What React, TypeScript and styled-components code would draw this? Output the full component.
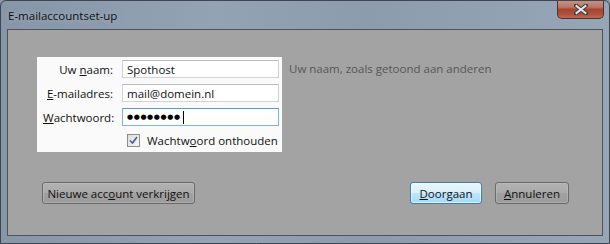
import React from "react";
import styled, { createGlobalStyle } from "styled-components";

const Global = createGlobalStyle`
  html, body { margin: 0; padding: 0; background: #8a99a8; }
  body { font-family: "Segoe UI", "Open Sans", "Noto Sans", sans-serif; }
`;

const Window = styled.div`
  box-sizing: border-box;
  width: 610px;
  height: 244px;
  border: 1px solid #3f4650;
  border-radius: 6px 6px 0 0;
  background: linear-gradient(90deg, #8797a8 0%, #93a3b3 35%, #8c9cad 60%, #96a6b6 100%);
  display: flex;
  flex-direction: column;
  padding: 0 6px 7px 6px;
  overflow: hidden;
`;

const TitleBar = styled.div`
  height: 28px;
  display: flex;
  align-items: flex-start;
  justify-content: space-between;
`;

const Title = styled.div`
  font-size: 11.5px;
  color: #101010;
  padding: 7px 0 0 1px;
  text-shadow: 0 0 6px rgba(200, 210, 220, 0.6);
`;

const CloseButton = styled.div`
  box-sizing: border-box;
  width: 47px;
  height: 19px;
  margin-top: -1px;
  margin-right: -1px;
  border: 1px solid #4a3433;
  border-top: none;
  border-radius: 0 0 5px 5px;
  background: linear-gradient(#c8968a 0%, #b87566 40%, #a5442f 52%, #b2513b 80%, #bd6a55 100%);
  display: flex;
  align-items: center;
  justify-content: center;
`;

const Content = styled.div`
  flex: 1;
  border: 1px solid #4f5358;
  background: #a3a3a3;
  display: flex;
  flex-direction: column;
  padding: 27px 0 31px 0;
`;

const FormRow = styled.div`
  display: flex;
  align-items: flex-start;
  gap: 7px;
  padding-left: 29px;
`;

const Panel = styled.div`
  box-sizing: border-box;
  width: 245px;
  background: #fafafa;
  padding: 3px 3px 4px 6px;
  display: grid;
  grid-template-columns: 70px 157px;
  column-gap: 9px;
  row-gap: 6px;
  align-items: center;
`;

const Label = styled.label`
  font-size: 11.5px;
  color: #111;
  text-align: right;
  white-space: nowrap;
`;

const Field = styled.div<{ $focused?: boolean }>`
  box-sizing: border-box;
  height: 18px;
  background: #fff;
  border: 1px solid ${(p) => (p.$focused ? "#7fb2e0" : "#d0d3d8")};
  border-top-color: ${(p) => (p.$focused ? "#5a9ad6" : "#b9bdc4")};
  font-size: 11.5px;
  color: #111;
  padding: 0 4px;
  display: flex;
  align-items: center;
  white-space: nowrap;
`;

const Dots = styled.span`
  font-family: "DejaVu Sans", sans-serif;
  font-size: 7px;
  letter-spacing: 0.6px;
  color: #000;
`;

const Caret = styled.span`
  display: inline-block;
  width: 1px;
  height: 13px;
  background: #000;
  margin-left: 2px;
`;

const CheckRow = styled.div`
  grid-column: 2;
  display: flex;
  align-items: center;
  gap: 7px;
  padding-left: 5px;
  height: 16px;
  font-size: 11.5px;
  color: #111;
  white-space: nowrap;
`;

const Box = styled.span`
  box-sizing: border-box;
  width: 13px;
  height: 13px;
  border: 1px solid #8e8f8f;
  background: linear-gradient(135deg, #dcdcdc, #f6f6f6);
  display: inline-flex;
  align-items: center;
  justify-content: center;
`;

const Help = styled.div`
  font-size: 11.5px;
  color: #575757;
  padding-top: 4px;
  white-space: nowrap;
`;

const ButtonRow = styled.div`
  margin-top: auto;
  display: flex;
  align-items: center;
  padding: 0 33px 0 34px;
  gap: 13px;
`;

const Spacer = styled.div`
  flex: 1;
`;

const Button = styled.div<{ $primary?: boolean; $w: number }>`
  box-sizing: border-box;
  height: 22px;
  width: ${(p) => p.$w}px;
  border: 1px solid ${(p) => (p.$primary ? "#3c7fb1" : "#6a6a6a")};
  border-radius: 3px;
  background: ${(p) =>
    p.$primary
      ? "linear-gradient(#eaf6fd 0%, #d9f0fc 48%, #bee6fd 52%, #a7d9f5 100%)"
      : "linear-gradient(#b2b2b2 0%, #aaaaaa 48%, #a1a1a1 52%, #9c9c9c 100%)"};
  box-shadow: inset 0 0 0 1px ${(p) => (p.$primary ? "rgba(255,255,255,0.6)" : "rgba(200,200,200,0.4)")};
  font-size: 11.5px;
  color: #111;
  display: flex;
  align-items: center;
  justify-content: center;
  white-space: nowrap;
`;

export default function App() {
  return (
    <>
      <Global />
      <Window>
        <TitleBar>
          <Title>E-mailaccountset-up</Title>
          <CloseButton>
            <svg width="14" height="11" viewBox="0 0 14 11">
              <path
                d="M2 1.5 L12 9.5 M12 1.5 L2 9.5"
                stroke="#3b3b3b"
                strokeWidth="4"
                strokeLinecap="square"
              />
              <path
                d="M2.5 2 L11.5 9 M11.5 2 L2.5 9"
                stroke="#e6e6e6"
                strokeWidth="2"
                strokeLinecap="square"
              />
            </svg>
          </CloseButton>
        </TitleBar>
        <Content>
          <FormRow>
            <Panel>
              <Label>
                Uw <u>n</u>aam:
              </Label>
              <Field>Spothost</Field>
              <Label>
                <u>E</u>-mailadres:
              </Label>
              <Field>mail@domein.nl</Field>
              <Label>
                <u>W</u>achtwoord:
              </Label>
              <Field $focused>
                <Dots>●●●●●●●●</Dots>
                <Caret />
              </Field>
              <CheckRow>
                <Box>
                  <svg width="9" height="9" viewBox="0 0 9 9">
                    <path d="M1 4.5 L3.5 7 L8 1" fill="none" stroke="#4a5f97" strokeWidth="1.6" />
                  </svg>
                </Box>
                <span>
                  Wachtw<u>o</u>ord onthouden
                </span>
              </CheckRow>
            </Panel>
            <Help>Uw naam, zoals getoond aan anderen</Help>
          </FormRow>
          <ButtonRow>
            <Button $w={153}>
              <span>
                Nieuwe acc<u>o</u>unt verkrijgen
              </span>
            </Button>
            <Spacer />
            <Button $primary $w={72}>
              <span>
                <u>D</u>oorgaan
              </span>
            </Button>
            <Button $w={74}>
              <span>
                <u>A</u>nnuleren
              </span>
            </Button>
          </ButtonRow>
        </Content>
      </Window>
    </>
  );
}
